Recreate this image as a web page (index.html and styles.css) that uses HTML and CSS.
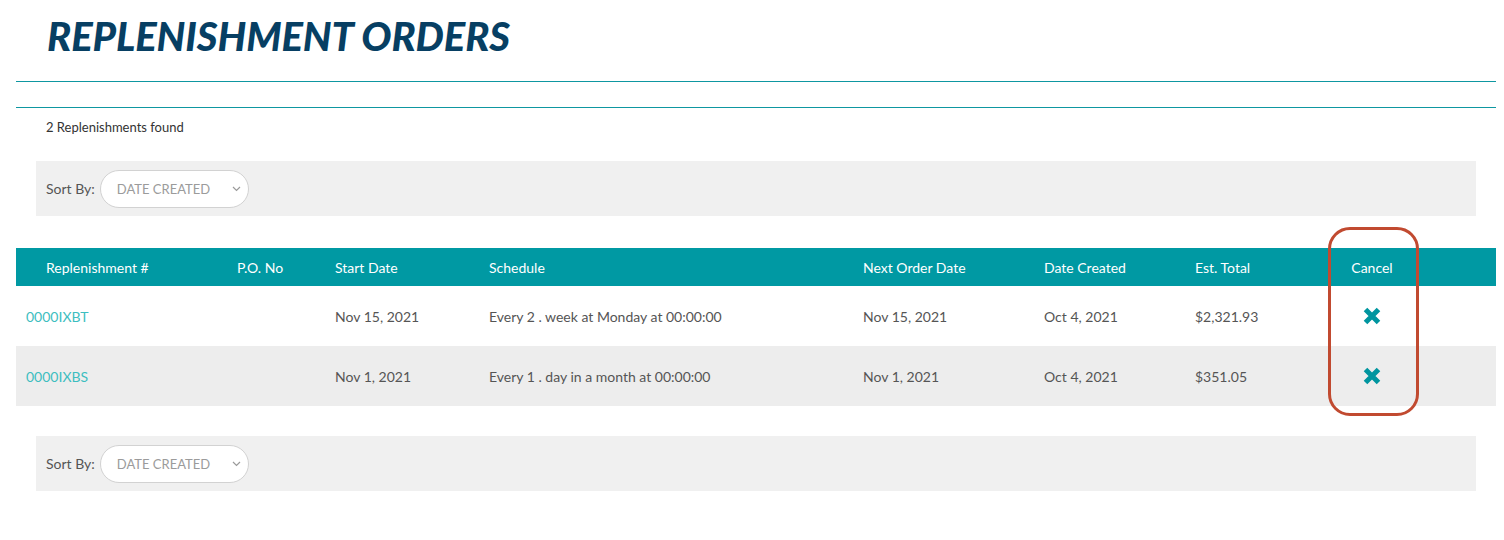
FILE: index.html
```html
<!DOCTYPE html>
<html>
<head>
<meta charset="utf-8">
<link rel="stylesheet" href="styles.css">
</head>
<body>
<div class="page">
  <h1 class="title">REPLENISHMENT ORDERS</h1>
  <div class="rule rule-top"></div>
  <div class="rule rule-bottom"></div>
  <div class="found">2 Replenishments found</div>

  <div class="sortbar">
    <span class="sort-label">Sort By:</span>
    <div class="select">
      <span>DATE CREATED</span>
      <svg class="chev" width="9" height="6" viewBox="0 0 9 6"><path d="M1 1 L4.5 4.5 L8 1" fill="none" stroke="#9a9a9a" stroke-width="1.2"/></svg>
    </div>
  </div>

  <div class="table-wrap">
    <div class="row head">
      <div class="c c1">Replenishment #</div>
      <div class="c">P.O. No</div>
      <div class="c">Start Date</div>
      <div class="c">Schedule</div>
      <div class="c">Next Order Date</div>
      <div class="c">Date Created</div>
      <div class="c">Est. Total</div>
      <div class="c cancel">Cancel</div>
      <div class="c"></div>
    </div>
    <div class="row body">
      <div class="c id">0000IXBT</div>
      <div class="c"></div>
      <div class="c">Nov 15, 2021</div>
      <div class="c">Every 2 . week at Monday at 00:00:00</div>
      <div class="c">Nov 15, 2021</div>
      <div class="c">Oct 4, 2021</div>
      <div class="c">$2,321.93</div>
      <div class="c cancel"><svg width="18" height="18" viewBox="0 0 18 18"><path d="M2.5 2.5 L15.5 15.5 M15.5 2.5 L2.5 15.5" stroke="#00959f" stroke-width="5" stroke-linecap="butt"/></svg></div>
      <div class="c"></div>
    </div>
    <div class="row body alt">
      <div class="c id">0000IXBS</div>
      <div class="c"></div>
      <div class="c">Nov 1, 2021</div>
      <div class="c">Every 1 . day in a month at 00:00:00</div>
      <div class="c">Nov 1, 2021</div>
      <div class="c">Oct 4, 2021</div>
      <div class="c">$351.05</div>
      <div class="c cancel"><svg width="18" height="18" viewBox="0 0 18 18"><path d="M2.5 2.5 L15.5 15.5 M15.5 2.5 L2.5 15.5" stroke="#00959f" stroke-width="5" stroke-linecap="butt"/></svg></div>
      <div class="c"></div>
    </div>
    <div class="highlight"></div>
  </div>

  <div class="sortbar sortbar-bottom">
    <span class="sort-label">Sort By:</span>
    <div class="select">
      <span>DATE CREATED</span>
      <svg class="chev" width="9" height="6" viewBox="0 0 9 6"><path d="M1 1 L4.5 4.5 L8 1" fill="none" stroke="#9a9a9a" stroke-width="1.2"/></svg>
    </div>
  </div>
</div>
</body>
</html>
```

FILE: styles.css
```css
* { box-sizing: border-box; }
html, body { margin: 0; padding: 0; background: #fff; }
body { font-family: Lato, "Open Sans", "Liberation Sans", sans-serif; color: #555; }

.page { margin: 0 8px 0 16px; padding-top: 10px; }

.title {
  margin: 0 0 0 31px;
  font-size: 40px;
  line-height: 52px;
  font-weight: 900;
  font-style: italic;
  color: #073f63;
  letter-spacing: -0.1px;
}

.rule { height: 1px; background: #0e97a1; }
.rule-top { margin-top: 19px; }
.rule-bottom { margin-top: 25px; }

.found {
  margin: 11px 0 0 30px;
  font-size: 13px;
  line-height: 16px;
  color: #333;
}

.sortbar {
  margin: 26px 20px 0 20px;
  height: 55px;
  background: #f0f0f0;
  display: flex;
  align-items: center;
  padding-left: 10px;
}
.sortbar-bottom { margin-top: 30px; }

.sort-label { font-size: 14px; color: #555; }

.select {
  margin-left: 5px;
  width: 149px;
  height: 38px;
  border: 1px solid #d2d2d2;
  border-radius: 19px;
  background: #fff;
  display: flex;
  align-items: center;
  justify-content: space-between;
  padding: 0 7px 0 16px;
  font-size: 13px;
  color: #9b9b9b;
}

.table-wrap { position: relative; margin-top: 32px; }

.row {
  display: grid;
  grid-template-columns: 211px 98px 154px 374px 181px 151px 143px 88px 1fr;
  align-items: center;
}
.head { height: 38px; background: #0099a3; color: #fff; font-size: 14px; }
.body { height: 60px; background: #fff; font-size: 14px; color: #555; }
.alt { background: #ededed; }

.c { padding-left: 10px; white-space: nowrap; }
.head .c1 { padding-left: 30px; }
.id { color: #3dbec0; }
.cancel { padding-left: 0; text-align: center; display: flex; justify-content: center; }

.highlight {
  position: absolute;
  left: 1312px;
  top: -21px;
  width: 91px;
  height: 189px;
  border: 3px solid #c14a30;
  border-radius: 22px;
  pointer-events: none;
}
```
